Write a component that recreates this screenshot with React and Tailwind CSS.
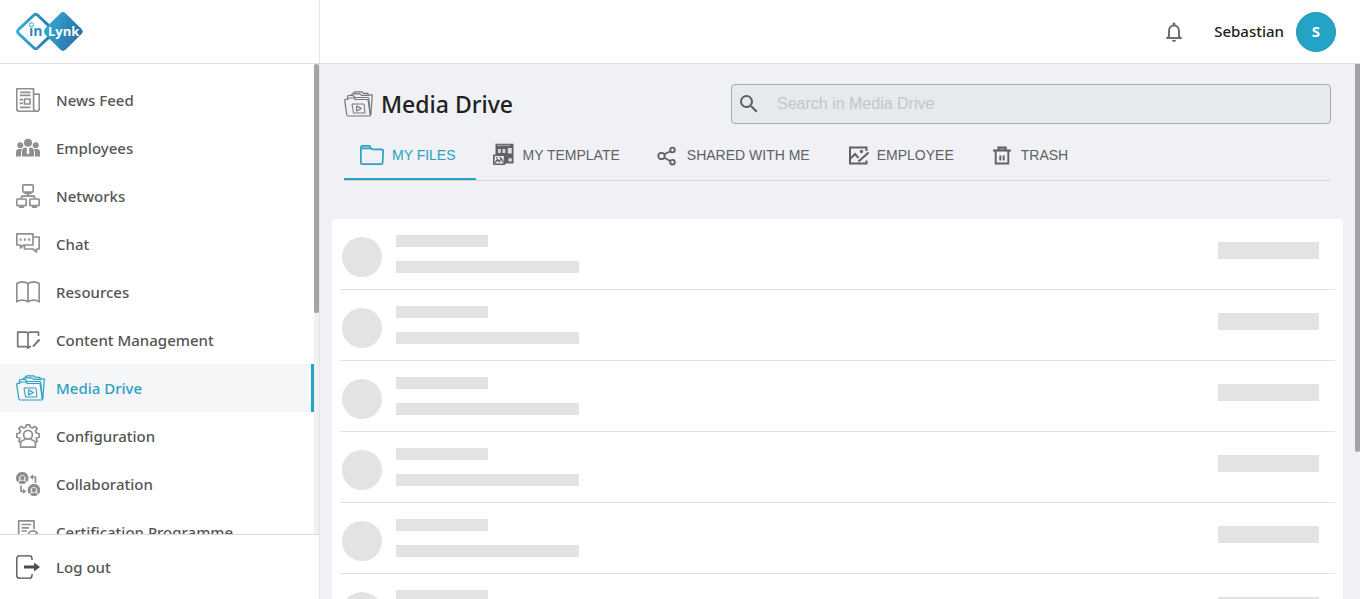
import React from "react";
import { MdSearch, MdNotificationsNone } from "react-icons/md";

function Svg({ size = 24, children, className = "" }) {
  return (
    <svg width={size} height="24" viewBox={`0 0 ${size} 24`} fill="none" stroke="currentColor" strokeWidth="1.7" strokeLinejoin="round" aria-hidden="true" className={`shrink-0 ${className}`}>
      {children}
    </svg>
  );
}

function NewsIcon() {
  return (
    <Svg>
      <path d="M17.5 5.5V1.2Q17.5.7 17 .7H1.2Q.7.7.7 1.2V20.5Q.7 23.3 3.5 23.3H20.5Q23.3 23.3 23.3 20.5V6.2H17.6V20.5Q17.6 23.3 20 23.3" />
      <path d="M4 4.4H14.5M4 7.3H14.5M3.5 11.7H7M3.5 15.3H7M4 19.3H14.5" />
      <rect x="8.5" y="11" width="5.5" height="5" />
    </Svg>
  );
}

function EmployeesIcon() {
  return (
    <Svg>
      <g fill="currentColor" stroke="none">
        <circle cx="4.3" cy="9.3" r="3" />
        <circle cx="19.7" cy="9.3" r="3" />
        <circle cx="12" cy="6.8" r="4" />
        <path d="M0 20.5V16Q0 13 3 13H5Q6 13 6 13.8Q5 14.8 5 16.5V20.5Z" />
        <path d="M24 20.5V16Q24 13 21 13H19Q18 13 18 13.8Q19 14.8 19 16.5V20.5Z" />
        <path d="M6 20.5V15.5Q6 11.7 9.5 11.5L11 12.3L10.6 17L12 18.5L13.4 17L13 12.3L14.5 11.5Q18 11.7 18 15.5V20.5Z" />
      </g>
    </Svg>
  );
}

function NetworksIcon() {
  return (
    <Svg>
      <rect x="6.8" y=".9" width="10.4" height="7.2" rx="1" />
      <rect x=".8" y="15" width="9.4" height="6.6" rx="1" />
      <rect x="13.8" y="15" width="9.4" height="6.6" rx="1" />
      <path d="M8.5 9.3H15.5M12 9.3V12.3M5.5 15V12.7Q5.5 12.2 6 12.2H18Q18.5 12.2 18.5 12.7V15M3 23.2H8M16 23.2H21" />
    </Svg>
  );
}

function ChatIcon() {
  return (
    <Svg>
      <path d="M.8 1.8H17V13H7.8L4.5 16V13H.8Z" />
      <path d="M17.5 5H23.2V17H20.5V20L17 17H8.5V13.3" />
      <path d="M3.6 7.7H5.6M7.9 7.7H9.9M12.2 7.7H14.2" strokeWidth="2.2" />
    </Svg>
  );
}

function BookIcon() {
  return (
    <Svg>
      <path d="M12 3.5Q9.5 1.8 6.4 1.8T.8 3.5V21.8Q3.3 20.2 6.4 20.2T12 21.8Q14.5 20.2 17.6 20.2T23.2 21.8V3.5Q20.7 1.8 17.6 1.8T12 3.5V21.5" />
    </Svg>
  );
}

function ContentIcon() {
  return (
    <Svg className="text-[#777777]">
      <path d="M22.5 8V4.2H13.5L12 5.2L10.5 4.2H1.7V18.7H10.5L12 20.2L13.5 18.7H15M12 5V20" />
      <path d="M23.5 11.5L17 18.7" strokeWidth="2" />
    </Svg>
  );
}

function MediaIcon() {
  return (
    <svg width="29" height="26" viewBox="0 0 29 26" fill="none" stroke="currentColor" strokeWidth="1.2" strokeLinejoin="round" aria-hidden="true" className="shrink-0">
      <path d="M.7 9.3Q.7 8.3 1.7 8.3H3.5L5 7H9.8L11.3 8.5H23Q24 8.5 24.2 9.5L26.3 24.3Q26.3 25 25.5 25H4Q3 25 2.8 24L.7 9.3Z" />
      <path d="M3.5 7.5V5.5Q3.5 4.5 4.5 4.5H9L11 6.5H23.5Q24.5 6.5 24.7 7.5L26.5 23.5" />
      <path d="M7 4L8.5 2.8H16L17.5 4.3H25.5M9 2.5L11 .8H18L19.5 2.3H24V4M28.3 3.8L26.8 24.5M25.5 3.8H28.5" />
      <path d="M8 13H20L21 22H9.5Z" strokeWidth="1" />
      <path d="M12.7 15V20L17.3 17.5Z" />
    </svg>
  );
}

function ConfigIcon() {
  return (
    <Svg>
      <path d="M4.5 18.5L2.8 17L4 14.2L.8 13.2V9.8L3.7 9L4.5 7L2.8 4.6L5.2 2.4L7.5 4L9.7 3.2L10.4.8H13.6L14.3 3.2L16.5 4L18.8 2.4L21.2 4.6L19.5 7L20.3 9L23.2 9.8V13.2L20 14.2L21.2 17L19.5 18.5" />
      <circle cx="12" cy="10.8" r="4.4" />
      <path d="M4.5 23.2V20Q4.5 16.5 8 16L9.5 14.5M19.5 23.2V20Q19.5 16.5 16 16L14.5 14.5M4 23.2H20" />
    </Svg>
  );
}

function CollabIcon() {
  return (
    <Svg>
      <path d="M2.5 9A4.700 4.700 0 1 1 10 9" strokeWidth="3.2" />
      <path d="M14.2 21A4.700 4.700 0 1 1 21.700 21" strokeWidth="3.2" />
      <g fill="currentColor" stroke="none">
        <circle cx="6.3" cy="6" r="2.2" />
        <path d="M2.2 10.7Q3 8.500 6.300 8.500T10.400 10.700Q6.300 13.500 2.200 10.700Z" />
        <circle cx="18" cy="18" r="2.2" />
        <path d="M13.900 22.700Q14.700 20.500 18 20.500T22.100 22.700Q18 25.500 13.900 22.700Z" />
        <path d="M13.8 5L17 2.200V7.800ZM10.200 19.300L7 16.500V22.100Z" />
      </g>
      <path d="M16 5H19.5V11M5 13.5V19.3H8" />
    </Svg>
  );
}

function CertificateIcon() {
  return (
    <Svg>
      <path d="M12 19.5H2.7V.9H18V9M5.5 4.5H15M5.5 7.8H13M5.5 11H11" />
      <circle cx="17" cy="15.5" r="4.7" />
      <path d="M14.8 15.5L16.5 17.2L20 13.5" />
    </Svg>
  );
}

function LogoutIcon() {
  return (
    <Svg className="text-[#4d4d4d]">
      <path d="M16 5V3.5Q16 .8 13.5 .8H3.5Q.8.8.8 3.5V20.5Q.8 23.2 3.5 23.2H13.5Q16 23.2 16 20.5V19" strokeWidth="1.3" />
      <path d="M8 10.4H18V7.5L24 12L18 16.5V13.6H8Z" fill="currentColor" stroke="none" />
    </Svg>
  );
}

function FolderIcon() {
  return (
    <Svg>
      <path d="M.9 5V19.5Q.9 21.2 2.6 21.2H21Q22.5 21.2 22.6 19.7L23.2 8Q23.2 6.3 21.5 6.3H12.5Q11.5 6.3 11 5.3L10 3.5Q9.7 2.9 9 2.9H3Q.9 2.9.9 5ZM1.2 5.3H11" />
    </Svg>
  );
}

function TemplateIcon() {
  return (
    <Svg size={22}>
      <path d="M2.5 .8H20.5V20.5H11V12H2.5Z" fill="currentColor" stroke="none" />
      <path d="M4 2.300H17" stroke="#c9cacc" strokeWidth=".8" />
      <path d="M5 6H7.800V10H5ZM9.500 6H12.300V10H9.500ZM14.800 5H18.800V10.500H14.800ZM15.500 15.200H18.800V18.500H15.500Z" fill="#d9dadd" stroke="none" />
      <rect x=".8" y="12.2" width="10.700" height="9" fill="#f0f1f5" strokeWidth="1.6" />
      <path d="M2 19.8L4.5 16.5L6.3 18.7L8.3 15.5L10.5 19.8M2.8 14.8H4.5M6.5 14.5H8" strokeWidth="1.4" />
    </Svg>
  );
}

function ShareIcon() {
  return (
    <Svg size={22}>
      <g strokeWidth="1.8">
        <circle cx="4.5" cy="13" r="3.2" />
        <circle cx="15.500" cy="7" r="2.3" />
        <circle cx="15.500" cy="19.2" r="2.3" />
        <path d="M7.300 11.3L13.500 8.2M7.300 14.7L13.500 18.2" />
      </g>
    </Svg>
  );
}

function PictureIcon() {
  return (
    <Svg size={22}>
      <g strokeWidth="2" strokeLinejoin="miter">
        <path d="M19.5 8V4.5H3V20.5H19.5V17.5" />
        <path d="M3.5 15.5L8 11L11.5 15M11.5 18.5L21.5 9.5" />
        <circle cx="14.5" cy="8.5" r=".7" />
      </g>
    </Svg>
  );
}

function TrashIcon() {
  return (
    <Svg size={22}>
      <g strokeWidth="1.9" strokeLinejoin="miter">
        <path d="M2 7.5H20M7.3 7V4.5H14.7V7M4.7 8V20.5H17.3V8M9.3 12.5V17.5M12.7 12.5V17.5" />
        <path d="M7 6H15" strokeWidth="1" />
      </g>
    </Svg>
  );
}

function Logo() {
  return (
    <svg width="68" height="40" viewBox="0 0 68 40" role="img" aria-label="inLynk" className="font-['Open_Sans',sans-serif]">
      <defs>
        <linearGradient id="logoLeft" x1="0" x2="1">
          <stop offset="0" stopColor="#36b3d8" />
          <stop offset="1" stopColor="#2670aa" />
        </linearGradient>
        <linearGradient id="logoRight" x1="0" x2="1" y1="0.3" y2="0.7">
          <stop offset="0" stopColor="#35acd3" />
          <stop offset="1" stopColor="#2869a6" />
        </linearGradient>
      </defs>
      <path d="M18 3Q19.7 1.5 21.4 3L37 17.7Q39 19.5 37 21.3L21.4 36Q19.7 37.5 18 36L2.4 21.3Q.6 19.5 2.4 17.7Z" fill="none" stroke="url(#logoLeft)" strokeWidth="3" />
      <path d="M44.5 1.2Q47 -1 49.5 1.2L65.5 17Q68 19.5 65.5 22L49.5 37.800Q47 40 44.500 37.800L29.500 23Q26.500 19.500 29.500 16Z" fill="url(#logoRight)" />
      <text x="13" y="24" fontSize="14" fontWeight="700" fill="#3289bd">in</text>
      <circle cx="15.5" cy="12.8" r="2" fill="#fff" stroke="#35a5ce" strokeWidth="1.3" strokeDasharray="1.2 .4" />
      <text x="32" y="24" fontSize="13" fontWeight="700" fill="#fff">Lynk</text>
    </svg>
  );
}

const navItems = [
  ["News Feed", NewsIcon],
  ["Employees", EmployeesIcon],
  ["Networks", NetworksIcon],
  ["Chat", ChatIcon],
  ["Resources", BookIcon],
  ["Content Management", ContentIcon],
  ["Media Drive", MediaIcon],
  ["Configuration", ConfigIcon],
  ["Collaboration", CollabIcon],
  ["Certification Programme", CertificateIcon],
];

const tabs = [
  ["MY FILES", FolderIcon],
  ["MY TEMPLATE", TemplateIcon],
  ["SHARED WITH ME", ShareIcon],
  ["EMPLOYEE", PictureIcon],
  ["TRASH", TrashIcon],
];

function NavLink({ label, Icon, active }) {
  return (
    <a
      href="#"
      aria-current={active ? "page" : undefined}
      className={`flex h-12 items-center border-r-[3px] pl-4 text-[15px] font-medium ${
        active ? "border-[#23a3c5] bg-[#f5f6f8] text-[#2ba0c2]" : "border-transparent text-[#555555]"
      }`}
    >
      <span className={`flex w-10 items-center ${active ? "" : "text-[#8f8f8f]"}`}>
        <Icon />
      </span>
      {label}
    </a>
  );
}

function Sidebar() {
  return (
    <aside className="flex w-80 shrink-0 flex-col border-r border-[#e4e4e4] bg-white">
      <div className="flex min-h-0 flex-1">
        <nav aria-label="Main" className="min-w-0 flex-1 overflow-hidden pt-3">
          {navItems.map(([label, Icon]) => (
            <NavLink key={label} label={label} Icon={Icon} active={label === "Media Drive"} />
          ))}
        </nav>
        <div className="w-[5px] bg-[#f1f1f1]">
          <div className="h-[53%] rounded-full bg-[#a3a5a4]" />
        </div>
      </div>
      <div className="border-t border-[#dcdcdc] py-2">
        <NavLink label="Log out" Icon={LogoutIcon} />
      </div>
    </aside>
  );
}

function SkeletonRow() {
  return (
    <li className="flex h-[71px] items-start border-b border-[#e2e2e2] pt-4 pr-4 pl-0.5">
      <div className="mt-0.5 size-10 rounded-full bg-[#e3e3e3]" />
      <div className="ml-3.5 flex flex-1 flex-col gap-3.5">
        <div className="h-3 w-[92px] bg-[#e3e3e3]" />
        <div className="h-3 w-[183px] bg-[#e3e3e3]" />
      </div>
      <div className="mt-[7px] h-[17px] w-[101px] bg-[#e3e3e3]" />
    </li>
  );
}

export default function App() {
  return (
    <div className="flex h-screen flex-col overflow-hidden bg-[#f0f1f5] font-['Noto_Sans','Open_Sans',sans-serif]">
      <header className="flex h-16 shrink-0 border-b border-[#dfdfdf] bg-white">
        <div className="flex w-80 shrink-0 items-center border-r border-[#e4e4e4] pl-4">
          <Logo />
        </div>
        <div className="flex flex-1 items-center justify-end pr-6">
          <button type="button" aria-label="Notifications" className="mr-7 text-[#707070]">
            <MdNotificationsNone size={24} />
          </button>
          <span className="mr-3 text-[15px] font-medium text-[#212121]">Sebastian</span>
          <button type="button" aria-label="Account" className="size-10 rounded-full border border-[#2796b3] bg-[#23a3c5] text-[15px] font-bold text-white">
            S
          </button>
        </div>
      </header>
      <div className="flex min-h-0 flex-1">
        <Sidebar />
        <main className="min-w-0 flex-1 overflow-hidden pt-5">
          <div className="px-6">
            <div className="flex h-10 items-center justify-between gap-6">
              <h1 className="flex items-center gap-2 text-[23px] font-medium text-[#212121]">
                <span className="text-[#777777]">
                  <MediaIcon />
                </span>
                Media Drive
              </h1>
              <label className="flex h-10 w-[600px] items-center rounded border border-[#a9abae] bg-[#e6e9ed] pl-[5px] font-['Liberation_Sans',sans-serif]">
                <MdSearch size={24} className="text-[#5c5e60]" />
                <input type="search" aria-label="Search in Media Drive" placeholder="Search in Media Drive" className="ml-4 flex-1 bg-transparent text-base outline-none placeholder:text-[#c3c6ca]" />
              </label>
            </div>
            <div role="tablist" className="mt-2 flex h-[49px] gap-px border-b border-[#d2d4d8] font-['Liberation_Sans',sans-serif] text-sm">
              {tabs.map(([label, Icon], i) => (
                <button
                  key={label}
                  type="button"
                  role="tab"
                  aria-selected={i === 0}
                  className={`flex items-center gap-2 border-b-2 pr-5 pl-4 ${
                    i === 0 ? "border-[#23a3c5] text-[#2ba0c2]" : "border-transparent text-[#5f6163]"
                  }`}
                >
                  <Icon />
                  {label}
                </button>
              ))}
            </div>
          </div>
          <ul aria-label="Loading files" className="mx-3 mt-[38px] rounded bg-white px-2">
            {[1, 2, 3, 4, 5, 6, 7].map((n) => (
              <SkeletonRow key={n} />
            ))}
          </ul>
        </main>
        <div className="w-[5px] shrink-0 bg-[#f1f1f1]">
          <div className="h-[72.5%] rounded-b-full bg-[#a3a5a4]" />
        </div>
      </div>
    </div>
  );
}
